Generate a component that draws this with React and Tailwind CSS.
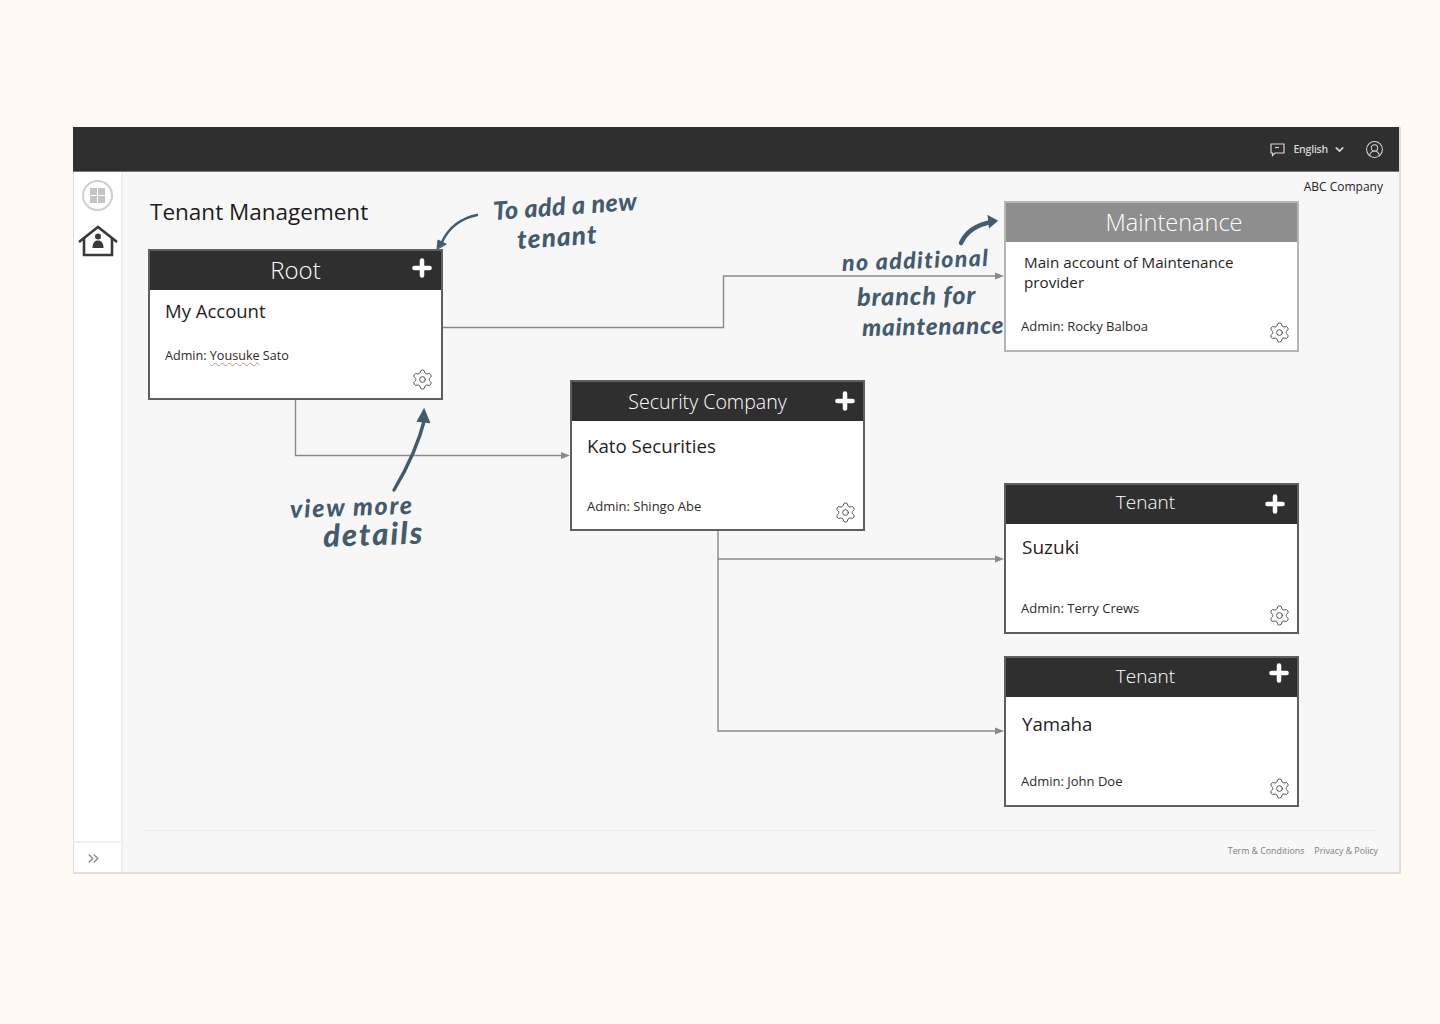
import { ChevronDown, ChevronsRight, Plus, Settings, CircleUserRound } from "lucide-react";

const hand = "absolute whitespace-nowrap font-['Lato',sans-serif] font-black italic text-[#425b6e] origin-left";

function TenantCard({ pos, head, headBg, border, title, titlePad, titleSize, body, admin, adminSize = "text-[13px]", plus, plusPos, adminPad, gearPos }) {
  return (
    <div className={`absolute w-[295px] h-[151px] bg-white border-2 ${border} ${pos}`}>
      <div className={`relative h-[39px] flex items-center justify-center text-white font-light ${headBg} ${titleSize}`}>
        <span className={titlePad}>{head}</span>
        {plus && <Plus size={26} strokeWidth={4.5} absoluteStrokeWidth className={`absolute text-white ${plusPos}`} />}
      </div>
      <div className={`text-[#1f1f1f] ${body}`}>{title}</div>
      <div className={`absolute leading-[18px] text-[#2b2b2b] ${adminSize} ${adminPad}`}>{admin}</div>
      <Settings size={23} strokeWidth={1} className={`absolute text-[#4a4a4a] ${gearPos}`} />
    </div>
  );
}

export default function App() {
  return (
    <div className="min-h-screen bg-[#fffaf4] pt-[127px] pl-[73px] font-['Open_Sans',sans-serif]">
      <div className="w-[1328px] h-[747px] flex flex-col border-r-2 border-b-2 border-l border-[#dedede]">
        {/* Header */}
        <header className="h-[45px] -ml-px bg-[#2f2f2f] border-b border-[#777] flex items-center justify-end pt-[1px] pr-[15px] text-[#d5d5d5] shrink-0">
          <svg width="15" height="15" viewBox="0 0 15 15" fill="none" stroke="currentColor" strokeWidth="1.200" className="mr-[8px]">
            <path d="M1 2h13v9H5l-2.500 2.500V11H1z" />
            <path d="M5 5.500h4" />
          </svg>
          <span className="pt-[1px] text-[10.500px] font-semibold tracking-[-0.2px]">English</span>
          <ChevronDown size={13} strokeWidth={3} className="ml-[5px] mr-[19px]" />
          <CircleUserRound size={19} strokeWidth={1.3} />
        </header>

        <div className="flex flex-1 min-h-0">
          {/* Sidebar */}
          <aside className="w-[49px] bg-white border-r-2 border-[#efefef] flex flex-col items-center shrink-0">
            <div className="mt-[8px] w-[31px] h-[31px] rounded-full border-2 border-[#cfcfcf] grid grid-cols-2 gap-[1px] p-[6px]">
              <span className="bg-[#c4c4c4]" />
              <span className="bg-[#c4c4c4]" />
              <span className="bg-[#c4c4c4]" />
              <span className="bg-[#c4c4c4]" />
            </div>
            <svg width="40" height="32" viewBox="0 0 40 32" className="mt-[14px] text-[#3a3a3a]">
              <path d="M1 17 20 2l19 15" fill="none" stroke="currentColor" strokeWidth="2.600" />
              <path d="M6 13v17h28V13" fill="none" stroke="currentColor" strokeWidth="2.600" />
              <circle cx="20" cy="11.500" r="3" fill="currentColor" />
              <path d="M14.500 23c0-5 2-7.500 5.500-7.500s5.500 2.500 5.500 7.500z" fill="currentColor" />
            </svg>
            <div className="mt-auto w-full h-[31px] border-t-2 border-[#f0f0f0] flex items-center justify-center pt-[2px] pr-[9px]">
              <ChevronsRight size={17} strokeWidth={2.2} className="text-[#8f8f8f]" />
            </div>
          </aside>

          {/* Canvas */}
          <main className="relative flex-1 bg-[#f7f7f7] flex flex-col">
            <div className="flex justify-end pt-[6px] pr-[16px] text-[12px] leading-[17px] text-[#222]">ABC Company</div>
            <h1 className="ml-[27px] mt-[1px] text-[22.500px] leading-[32px] font-normal text-[#1c1c1c]">Tenant Management</h1>

            <svg width="1277" height="660" className="absolute left-0 top-0" fill="none" stroke="#8a8a8a" strokeWidth="1.400">
              <path d="M320 155.500H600.500V104H873" />
              <path d="M172.500 228V283.500H440" />
              <path d="M595 359V559H874" />
              <path d="M595 387H874" />
              <path d="M872 100.500v7l9-3.500zM438 280v7l9-3.500zM872 383.500v7l9-3.500zM872 555.500v7l9-3.500z" fill="#8a8a8a" stroke="none" />
            </svg>

            <TenantCard pos="left-[25px] top-[77px]" border="border-[#5f5f5f]" head="Root" headBg="bg-[#2f2f2f]" titleSize="text-[24px]" titlePad="pb-[2px]"
              title="My Account" body="pl-[15px] pt-[8px] text-[18.500px] leading-[26px]"
              adminSize="text-[12.600px]"
              admin={<>Admin: <span className="underline decoration-wavy decoration-[#999] decoration-1 underline-offset-2">Yousuke</span> Sato</>}
              adminPad="left-[15px] top-[96px]" plus plusPos="right-[6px] top-[4px]" gearPos="right-[7px] bottom-[7px]" />

            <TenantCard pos="left-[447px] top-[208px]" border="border-[#5f5f5f]" head="Security Company" headBg="bg-[#2f2f2f]" titleSize="text-[19.600px]" titlePad="pr-[20px]"
              title="Kato Securities" body="pl-[15px] pt-[12px] text-[18.700px] leading-[26px]"
              admin="Admin: Shingo Abe" adminPad="left-[15px] top-[115px]" plus plusPos="right-[5px] top-[6px]" gearPos="right-[6px] bottom-[5px]" />

            <TenantCard pos="left-[881px] top-[29px]" border="border-[#b5b5b5]" head="Maintenance" headBg="bg-[#8e8e8e]" titleSize="text-[23.500px]" titlePad="pl-[45px]"
              title={<>Main account of Maintenance<br />provider</>} body="pl-[18px] pt-[10px] text-[15.200px] leading-[20px]"
              admin="Admin: Rocky Balboa" adminPad="left-[15px] top-[114px]" gearPos="right-[6px] bottom-[6px]" />

            <TenantCard pos="left-[881px] top-[311px]" border="border-[#5f5f5f]" head="Tenant" headBg="bg-[#2f2f2f]" titleSize="text-[19px]" titlePad="pr-[12px] pb-[4px]"
              title="Suzuki" body="pl-[16px] pt-[10px] text-[19px] leading-[26px]"
              admin="Admin: Terry Crews" adminPad="left-[15px] top-[114px]" plus plusPos="right-[9px] top-[6px]" gearPos="right-[6px] bottom-[5px]" />

            <TenantCard pos="left-[881px] top-[484px]" border="border-[#5f5f5f]" head="Tenant" headBg="bg-[#2f2f2f]" titleSize="text-[19px]" titlePad="pr-[12px] pb-[2px]"
              title="Yamaha" body="pl-[16px] pt-[14px] text-[18.700px] leading-[26px]"
              admin="Admin: John Doe" adminPad="left-[15px] top-[114px]" plus plusPos="right-[5px] top-[2px]" gearPos="right-[6px] bottom-[5px]" />

            {/* Handwritten notes */}
            <svg width="1277" height="660" className="absolute left-0 top-0 pointer-events-none text-[#425b6e]" fill="none" stroke="currentColor" strokeLinecap="round">
              <path d="M354 43C335 47 325 57 319 70" strokeWidth="2.400" />
              <path d="M314 77l1-9 8 4z" fill="currentColor" strokeWidth="1" />
              <path d="M838 71C843 60 853 53 868 50" strokeWidth="4.400" />
              <path d="M866 45l7 4-6 5z" fill="currentColor" strokeWidth="2.500" />
              <path d="M271 318C286 293 296 270 302 246" strokeWidth="3.400" />
              <path d="M295 249l6-11 5 12z" fill="currentColor" strokeWidth="2" />
            </svg>
            <span className={`${hand} left-[370px] top-[28px] text-[25px] leading-[20px] tracking-[0.500px] -rotate-[4deg]`}>To add a new</span>
            <span className={`${hand} left-[394px] top-[57px] text-[26px] leading-[20px] tracking-[1.200px] -rotate-[4deg]`}>tenant</span>
            <span className={`${hand} left-[719px] top-[79px] text-[23px] leading-[22px] tracking-[1.400px] -rotate-2`}>no additional</span>
            <span className={`${hand} left-[734px] top-[113px] text-[25px] leading-[22px] tracking-[1px] rotate-[-1deg]`}>branch for</span>
            <span className={`${hand} left-[739px] top-[144px] text-[24px] leading-[22px] tracking-[0.900px] rotate-[-1deg]`}>maintenance</span>
            <span className={`${hand} left-[167px] top-[326px] text-[25px] leading-[20px] tracking-[1.700px] -rotate-2`}>view more</span>
            <span className={`${hand} left-[200px] top-[351px] text-[31px] leading-[24px] tracking-[2px] -rotate-2`}>details</span>

            {/* Footer */}
            <footer className="mt-auto mx-[21px] h-[42px] border-t border-[#ececec] flex items-center justify-end gap-[10px] text-[8.800px] text-[#7d7d7d]">
              <span>Term &amp; Conditions</span>
              <span>Privacy &amp; Policy</span>
            </footer>
          </main>
        </div>
      </div>
    </div>
  );
}
